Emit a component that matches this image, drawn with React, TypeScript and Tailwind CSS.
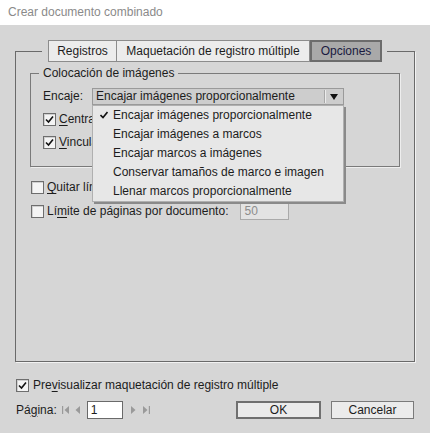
import React from "react";

const font = { fontFamily: '"Liberation Sans", Arial, sans-serif' };

function Check({ checked }: { checked?: boolean }) {
  return (
    <span className="w-[13px] h-[13px] shrink-0 border border-[#6e6e6e] bg-[#f4f4f4] shadow-[inset_1px_1px_0_#d0d0d0] flex items-center justify-center">
      {checked && (
        <svg width="9" height="9" viewBox="0 0 9 9">
          <path d="M1 4.5 L3.5 7 L8 1.5" stroke="#111" strokeWidth="1.6" fill="none" />
        </svg>
      )}
    </span>
  );
}

function U({ children }: { children: React.ReactNode }) {
  return <span className="underline underline-offset-2">{children}</span>;
}

export default function App() {
  return (
    <div className="w-[430px] h-[433px] bg-[#d6d6d6] text-[12px] leading-[15px] text-[#1c1c1c] flex flex-col overflow-hidden" style={font}>
      <div className="h-[25px] bg-white flex items-center pl-[8px] text-[#8a8a8a] text-[12px]">Crear documento combinado</div>

      <fieldset className="mt-[15px] mx-[15px] h-[322px] min-w-0 border border-[#6a6a6a] shadow-[1px_1px_0_#f2f2f2] p-0 m-0 relative">
        <legend className="ml-[26px] px-[6px] pr-[5px] p-0">
          <div className="flex h-[22px]">
            <div className="w-[69px] border border-[#8c8c8c] bg-[#ececec] flex items-center justify-center">Registros</div>
            <div className="w-[193px] border border-l-0 border-[#8c8c8c] bg-[#ececec] flex items-center justify-center">Maquetación de registro múltiple</div>
            <div className="w-[72px] border-2 border-[#6c6c6c] bg-[#a9a9a9] text-[#1a1a40] flex items-center justify-center">Opciones</div>
          </div>
        </legend>

        <fieldset className="mt-[4px] mx-[14px] min-w-0 border border-[#7a7a7a] shadow-[1px_1px_0_#eeeeee] p-0">
          <legend className="ml-[8px] px-[4px]">Colocación de imágenes</legend>
          <div className="pl-[12px] pt-[7px] pb-[15px] flex flex-col gap-[6px]">
            <div className="flex items-center h-[17px] relative">
              <span>Encaje:</span>
              <div className="ml-[9px] w-[252px] h-[17px] border border-[#9a9a9a] bg-[#cdcdcd] flex items-center relative">
                <span className="pl-[3px] flex-1 whitespace-nowrap">Encajar imágenes proporcionalmente</span>
                <span className="w-[2px] h-[13px] border-l border-[#a8a8a8] border-r border-r-[#ececec] mr-[4px]"></span>
                <svg width="8" height="6" viewBox="0 0 8 6" className="mr-[5px]">
                  <path d="M0 0 H8 L4 6 Z" fill="#111" />
                </svg>
                <div className="absolute left-[-1px] top-[16px] w-[252px] bg-[#e7e7e7] border border-[#b0b0b0] shadow-[2px_2px_0_#8a8a8a] z-10">
                  {[
                    "Encajar imágenes proporcionalmente",
                    "Encajar imágenes a marcos",
                    "Encajar marcos a imágenes",
                    "Conservar tamaños de marco e imagen",
                    "Llenar marcos proporcionalmente",
                  ].map((t, i) => (
                    <div key={t} className="h-[19px] flex items-center pl-[20px] relative whitespace-nowrap">
                      {i === 0 && (
                        <svg width="8" height="8" viewBox="0 0 8 8" className="absolute left-[7px] top-[5px]">
                          <path d="M0.5 4 L3 6.5 L7.5 1" stroke="#111" strokeWidth="1.6" fill="none" />
                        </svg>
                      )}
                      {t}
                    </div>
                  ))}
                </div>
              </div>
            </div>
            <div className="flex items-center h-[17px] gap-[3px]">
              <Check checked />
              <span className="whitespace-nowrap"><U>C</U>entrar imágenes en marcos</span>
            </div>
            <div className="flex items-center h-[17px] gap-[3px]">
              <Check checked />
              <span className="whitespace-nowrap"><U>V</U>incular imágenes</span>
            </div>
          </div>
        </fieldset>

        <div className="pl-[15px] mt-[12px] flex flex-col gap-[6px]">
          <div className="flex items-center h-[17px] gap-[3px]">
            <Check />
            <span className="whitespace-nowrap"><U>Q</U>uitar líneas en blanco de campos vacíos</span>
          </div>
          <div className="flex items-center h-[18px] gap-[3px]">
            <Check />
            <span className="whitespace-nowrap">Lí<U>m</U>ite de páginas por documento:</span>
            <div className="ml-[9px] w-[49px] h-[18px] border border-[#aaaaaa] bg-[#e3e3e3] text-[#8c8c8c] pl-[3px] flex items-center">50</div>
          </div>
        </div>
      </fieldset>

      <div className="mt-[16px] ml-[16px] flex items-center h-[15px] gap-[4px]">
        <Check checked />
        <span>Pre<U>v</U>isualizar maquetación de registro múltiple</span>
      </div>

      <div className="mt-[8px] mx-[16px] flex items-center h-[18px]">
        <span>Pá<U>g</U>ina:</span>
        <svg width="8" height="8" viewBox="0 0 8 8" className="ml-[5px]">
          <rect x="0" y="0" width="1.2" height="8" fill="#9a9a9a" />
          <path d="M7 0 V8 L2.5 4 Z" fill="#9a9a9a" />
        </svg>
        <svg width="6" height="8" viewBox="0 0 6 8" className="ml-[5px]">
          <path d="M5 0 V8 L0.5 4 Z" fill="#9a9a9a" />
        </svg>
        <div className="ml-[6px] w-[36px] h-[18px] border border-[#6a6a6a] bg-white pl-[3px] flex items-center">1</div>
        <svg width="6" height="8" viewBox="0 0 6 8" className="ml-[7px]">
          <path d="M1 0 V8 L5.5 4 Z" fill="#9a9a9a" />
        </svg>
        <svg width="8" height="8" viewBox="0 0 8 8" className="ml-[6px]">
          <path d="M1 0 V8 L5.5 4 Z" fill="#9a9a9a" />
          <rect x="6.8" y="0" width="1.2" height="8" fill="#9a9a9a" />
        </svg>
        <div className="ml-auto w-[85px] h-[18px] border-2 border-[#707070] bg-[#ebebeb] flex items-center justify-center">OK</div>
        <div className="ml-[10px] w-[83px] h-[18px] border border-[#7a7a7a] bg-[#ebebeb] flex items-center justify-center">Cancelar</div>
      </div>
    </div>
  );
}
